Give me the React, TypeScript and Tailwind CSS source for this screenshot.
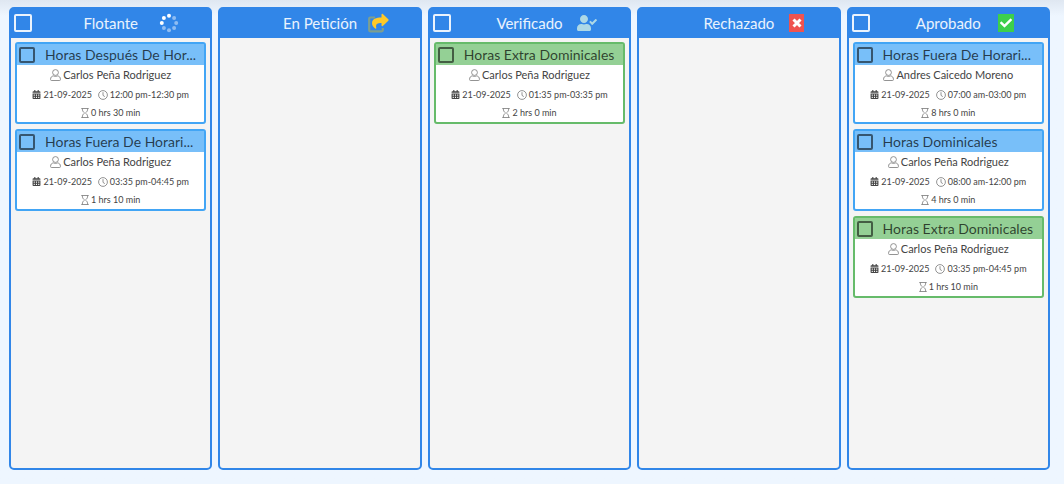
import type { ReactNode } from "react";
import { FaCalendarAlt, FaCheck, FaUserCheck } from "react-icons/fa";

type Entry = {
    title: string;
    person: string;
    date: string;
    range: string;
    total: string;
    extra?: boolean;
};

type Column = {
    name: string;
    icon: ReactNode;
    selectable: boolean;
    entries: Entry[];
};

function SpinnerIcon() {
    return (
        <svg viewBox="0 0 20 20" className="w-5 h-5" fill="#fff">
            <circle cx="10" cy="2.8" r="2" />
            <circle cx="4.9" cy="4.9" r="2" />
            <circle cx="2.8" cy="10" r="2" />
            <g opacity="0.45">
                <circle cx="15.1" cy="4.9" r="2" />
                <circle cx="17.2" cy="10" r="2" />
                <circle cx="15.1" cy="15.1" r="2" />
                <circle cx="10" cy="17.2" r="2" />
                <circle cx="4.9" cy="15.1" r="2" />
            </g>
        </svg>
    );
}

function ShareIcon() {
    return (
        <svg viewBox="0 0 22 20" className="w-[22px] h-5">
            <path
                d="M8 4.500H3.200Q2.200 4.500 2.200 5.500v11.800q0 1 1 1h11.600q1 0 1-1V15"
                fill="none"
                stroke="#7d9f8f"
                strokeWidth="2.2"
            />
            <path
                d="M14.500 1.600c0-.8.8-1.100 1.300-.6l5.500 5.200c.5.500.5 1.100 0 1.600l-5.500 5.200c-.5.500-1.300.2-1.300-.6V10c-4 0-6.200 1-5.200 4.700.2.800-.6 1.200-1.100.800-1.600-1.200-3.200-3-3.200-5.300 0-4.400 4-5.700 9.500-5.800z"
                fill="#ffc928"
            />
        </svg>
    );
}

function CrossIcon() {
    return (
        <svg viewBox="0 0 10 10" className="w-2.5 h-2.5" stroke="#fff" strokeWidth="3">
            <path d="M1.500 1.500l7 7M8.500 1.500l-7 7" />
        </svg>
    );
}

function UserIcon() {
    return (
        <svg viewBox="0 0 11 12" className="w-[11px] h-3 text-[#777]" fill="none" stroke="currentColor" strokeWidth="0.8">
            <circle cx="5.5" cy="3.5" r="2.9" />
            <path d="M3.3 6.9C1.5 7.2.6 8.4.6 10.2v.5c0 .5.3.8.8.8h8.200c.5 0 .8-.3.8-.8v-.5c0-1.800-.9-3-2.700-3.300-1.400.7-3 .7-4.400 0z" />
        </svg>
    );
}

function ClockIcon() {
    return (
        <svg viewBox="0 0 10 10" className="w-2.5 h-2.5 text-[#777]" fill="none" stroke="currentColor" strokeWidth="0.8">
            <circle cx="5" cy="5" r="4.4" />
            <path d="M5 2.200v3.200l1.800 1.200" />
        </svg>
    );
}

function HourglassIcon() {
    return (
        <svg viewBox="0 0 8 10" className="w-2 h-2.5 text-[#777]" fill="none" stroke="currentColor" strokeWidth="0.8">
            <path d="M.3.5h7.400M.3 9.500h7.400M1.300.5c0 2.500.9 3.400 2.200 4.500-1.300 1.100-2.200 2-2.200 4.500M6.700.5c0 2.500-.9 3.400-2.200 4.500 1.300 1.100 2.200 2 2.200 4.500" />
        </svg>
    );
}

const columns: Column[] = [
    {
        name: "Flotante",
        icon: <SpinnerIcon />,
        selectable: true,
        entries: [
            {
                title: "Horas Después De Hor...",
                person: "Carlos Peña Rodriguez",
                date: "21-09-2025",
                range: "12:00 pm-12:30 pm",
                total: "0 hrs 30 min",
            },
            {
                title: "Horas Fuera De Horari...",
                person: "Carlos Peña Rodriguez",
                date: "21-09-2025",
                range: "03:35 pm-04:45 pm",
                total: "1 hrs 10 min",
            },
        ],
    },
    { name: "En Petición", icon: <ShareIcon />, selectable: false, entries: [] },
    {
        name: "Verificado",
        icon: <FaUserCheck className="w-5 h-4 text-[#add8e6]" />,
        selectable: true,
        entries: [
            {
                title: "Horas Extra Dominicales",
                person: "Carlos Peña Rodriguez",
                date: "21-09-2025",
                range: "01:35 pm-03:35 pm",
                total: "2 hrs 0 min",
                extra: true,
            },
        ],
    },
    {
        name: "Rechazado",
        icon: (
            <span className="flex items-center justify-center w-[15px] h-[18px] bg-[#ef5350]">
                <CrossIcon />
            </span>
        ),
        selectable: false,
        entries: [],
    },
    {
        name: "Aprobado",
        icon: (
            <span className="flex items-center justify-center w-4 h-[18px] bg-[#3dcf4b]">
                <FaCheck className="w-3 h-3 text-white" />
            </span>
        ),
        selectable: true,
        entries: [
            {
                title: "Horas Fuera De Horari...",
                person: "Andres Caicedo Moreno",
                date: "21-09-2025",
                range: "07:00 am-03:00 pm",
                total: "8 hrs 0 min",
            },
            {
                title: "Horas Dominicales",
                person: "Carlos Peña Rodriguez",
                date: "21-09-2025",
                range: "08:00 am-12:00 pm",
                total: "4 hrs 0 min",
            },
            {
                title: "Horas Extra Dominicales",
                person: "Carlos Peña Rodriguez",
                date: "21-09-2025",
                range: "03:35 pm-04:45 pm",
                total: "1 hrs 10 min",
                extra: true,
            },
        ],
    },
];

function EntryCard({ entry }: { entry: Entry }) {
    return (
        <article
            className={`border-2 rounded-[3px] bg-white ${
                entry.extra ? "border-[#66bb6a]" : "border-[#42a5f5]"
            }`}
        >
            <label
                className={`flex items-center gap-2.5 h-[21px] pl-0.5 ${
                    entry.extra ? "bg-[#94d095]" : "bg-[#78bff9]"
                }`}
            >
                <input
                    type="checkbox"
                    className="appearance-none shrink-0 w-4 h-4 border-2 border-black/55 rounded-[2px] checked:bg-black/55"
                />
                <span className="whitespace-nowrap text-sm leading-5 text-black/70">{entry.title}</span>
            </label>
            <div className="flex flex-col items-center text-[#444] whitespace-nowrap">
                <p className="flex items-center gap-0.5 h-5 text-[11px]">
                    <UserIcon />
                    {entry.person}
                </p>
                <p className="flex items-center gap-1.5 h-[19px] text-[9px]">
                    <span className="flex items-center gap-0.5">
                        <FaCalendarAlt className="w-[9px] h-[9px]" />
                        {entry.date}
                    </span>
                    <span className="flex items-center gap-0.5">
                        <ClockIcon />
                        {entry.range}
                    </span>
                </p>
                <p className="flex items-center gap-0.5 h-[18px] pb-px text-[9px]">
                    <HourglassIcon />
                    {entry.total}
                </p>
            </div>
        </article>
    );
}

export default function App() {
    return (
        <main
            className="min-h-screen grid grid-cols-5 gap-1.5 pt-[7px] pb-3.5 pl-[9px] pr-3.5 bg-[#eef6ff] bg-linear-to-b from-[#dfe7f1] to-[#eef6ff] to-[16px]"
            style={{ fontFamily: "Lato, sans-serif" }}
        >
            {columns.map((col) => (
                <section key={col.name} className="min-w-0 border-2 border-[#3186e8] rounded-[5px] bg-[#f4f4f4]">
                    <header className="grid grid-cols-[1fr_80px_1fr] items-center h-[29px] pb-0.5 bg-[#3186e8]">
                        <div className="flex pl-[3px]">
                            {col.selectable && (
                                <input
                                    type="checkbox"
                                    aria-label={`Seleccionar ${col.name}`}
                                    className="appearance-none w-[18px] h-[18px] border-2 border-white/90 rounded-[2px] checked:bg-white/90"
                                />
                            )}
                        </div>
                        <h2 className="text-center text-[15px] leading-5 text-white/90">{col.name}</h2>
                        <div className="flex justify-center pr-6">{col.icon}</div>
                    </header>
                    <div className="flex flex-col gap-[5px] p-1">
                        {col.entries.map((entry) => (
                            <EntryCard key={entry.title} entry={entry} />
                        ))}
                    </div>
                </section>
            ))}
        </main>
    );
}
